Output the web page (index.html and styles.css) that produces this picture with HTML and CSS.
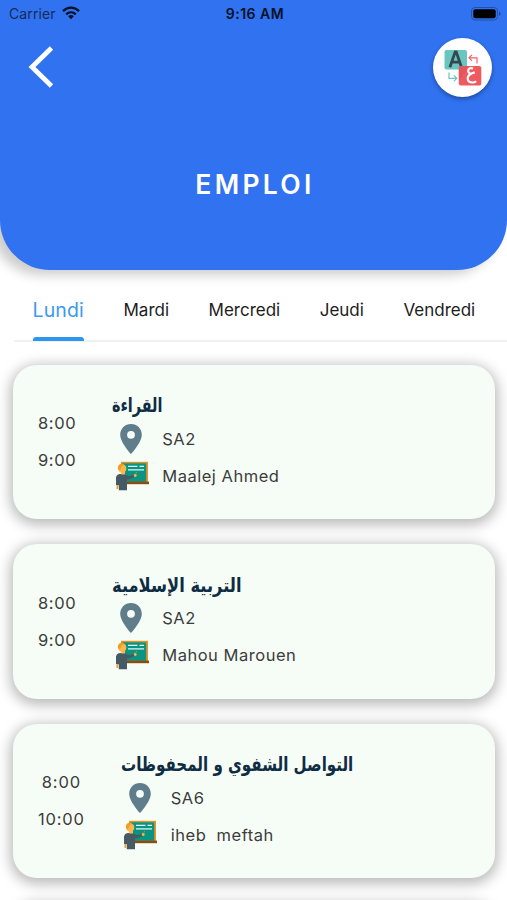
FILE: index.html
```html
<!DOCTYPE html>
<html lang="fr">
<head>
<meta charset="utf-8">
<title>Emploi</title>
<link rel="stylesheet" href="styles.css">
</head>
<body>
<svg class="defs" width="0" height="0" aria-hidden="true">
  <symbol id="pin" viewBox="0 0 22 30"><path fill="#607d8b" fill-rule="evenodd" d="M11 0C4.900 0 .2 4.700.2 10.700.2 18.500 11 30 11 30S21.800 18.500 21.800 10.700C21.800 4.700 17.100 0 11 0ZM11 6.900a3.900 3.900 0 1 1 0 7.800a3.900 3.900 0 0 1 0-7.800Z"/></symbol>
  <symbol id="teacher" viewBox="0 0 34 30">
    <path fill="#e69329" d="M6 .8h27v21H6z"/>
    <path fill="#0b9482" d="M7.500 2.300h23.700v18.500H7.500z"/>
    <path fill="#8a4b14" d="M10 20.600h24v2.600H10z"/>
    <path stroke="#dff5f0" stroke-width="1.400" d="M13 5.400h9.500M24.500 5.400h4.500M13 8.900h16"/>
    <path fill="#455a64" d="M1 17.500C1 14.200 3 13 6 13h3.500l4.500 2.200 5.500-1.600.8 2.200-6 2.400-2.300.2v10.900H3.800v-5L1 24Z"/>
    <circle cx="7.200" cy="7.600" r="4.100" fill="#ffb74d"/>
    <path fill="#f39c26" d="M3 8c-.7-4.800 3.500-6.500 6.500-4.200L6.500 5.500 5 9.500Z"/>
    <path fill="#ffb74d" d="M6 10h4v3.500H6z"/>
    <circle cx="20.200" cy="14.500" r="1.400" fill="#ffb74d"/>
    <path stroke="#c79a32" stroke-width=".7" d="m20 14 1.700-3"/>
    <path fill="#f39c26" d="M1.500 24h1.700v4H1.500z"/>
  </symbol>
</svg>
<header class="header">
  <div class="status">
    <div class="carrier"><span>Carrier</span>
      <svg width="18" height="14" viewBox="0 0 18 14" fill="none" stroke="#071126"><path stroke-width="2.300" d="M1 5.100C5.600.500 12.400.500 17 5.100M4.200 8.300C7 5.600 11 5.600 13.800 8.300"/><path fill="#071126" stroke="none" d="M6.200 10.200c1.700-1.500 3.900-1.500 5.600 0L9 13.200Z"/></svg>
    </div>
    <div class="clock">9:16 AM</div>
    <svg class="battery" width="30" height="14" viewBox="0 0 30 14"><rect x=".5" y=".5" width="26" height="12.500" rx="3.500" fill="none" stroke="#2350a5"/><rect x="2.300" y="2.300" width="22.400" height="9" rx="2" fill="#000"/><path fill="#1c4590" d="M28 4.700c2 .8 2 3.300 0 4.100Z"/></svg>
  </div>
  <div class="actions">
    <svg class="back" width="26" height="42" viewBox="0 0 26 42"><path d="M23.500 2 4 21l19.500 19" fill="none" stroke="#fff" stroke-width="4.800"/></svg>
    <div class="language">
      <svg width="38" height="38" viewBox="0 0 38 38">
        <rect x=".500" y="1" width="22.500" height="19.500" rx="2" fill="#68c5c0"/>
        <path d="m5.900 18.300 5.300-15.500h1l5.300 15.500M8 13.200h7.400" fill="none" stroke="#37474f" stroke-width="2.800"/>
        <rect x="14.800" y="17" width="22.500" height="19.500" rx="2" fill="#ef5a60"/>
        <path d="M14.800 19V32l8.200-11.500V17H16.800a2 2 0 0 0-2 2Z" fill="#cf5057" opacity=".4"/>
        <path d="M29 19.500c-5-2-6.500 4-2.500 5.200l4.300-1.300M28 24.500c-6 2-5.500 9 .5 9 1.800 0 2.800-.5 3.500-1.200" fill="none" stroke="#fff" stroke-width="2.200"/>
        <path d="M33 14.500V8.800h-8M28 5.800l-3 3 3 3" fill="none" stroke="#ef6268" stroke-width="1.200"/>
        <path d="M5 23.500v5.800h7.500M9.800 26.300l3 3-3 3" fill="none" stroke="#68c5c0" stroke-width="1.200"/>
      </svg>
    </div>
  </div>
  <h1 class="title">EMPLOI</h1>
</header>
<nav class="tabs">
  <a class="tab active">Lundi</a><a class="tab">Mardi</a><a class="tab">Mercredi</a><a class="tab">Jeudi</a><a class="tab">Vendredi</a>
</nav>
<main class="list">
  <article class="card">
    <div class="times"><span>8:00</span><span>9:00</span></div>
    <div class="details"><h2 class="subject s1" lang="ar" dir="rtl">القراءة</h2>
      <div class="row"><svg class="pin"><use href="#pin"/></svg><span>SA2</span></div>
      <div class="row"><svg class="teacher"><use href="#teacher"/></svg><span>Maalej Ahmed</span></div></div>
  </article>
  <article class="card">
    <div class="times"><span>8:00</span><span>9:00</span></div>
    <div class="details"><h2 class="subject s2" lang="ar" dir="rtl">التربية الإسلامية</h2>
      <div class="row"><svg class="pin"><use href="#pin"/></svg><span>SA2</span></div>
      <div class="row"><svg class="teacher"><use href="#teacher"/></svg><span>Mahou Marouen</span></div></div>
  </article>
  <article class="card">
    <div class="times wide"><span>8:00</span><span>10:00</span></div>
    <div class="details"><h2 class="subject s3" lang="ar" dir="rtl">التواصل الشفوي و المحفوظات</h2>
      <div class="row"><svg class="pin"><use href="#pin"/></svg><span>SA6</span></div>
      <div class="row"><svg class="teacher"><use href="#teacher"/></svg><span>iheb&nbsp; meftah</span></div></div>
  </article>
  <article class="card"></article>
</main>
</body>
</html>
```

FILE: styles.css
```css
* { box-sizing: border-box; }
html, body { height: 100%; }
body { margin: 0; background: #fff; overflow: hidden; font-family: Inter, "DejaVu Sans", sans-serif; display: flex; flex-direction: column; }
.defs { position: absolute; }
.header { flex: none; height: 269.500px; background: #3072f0; border-radius: 0 0 50px 50px; box-shadow: -9px 5px 12px rgba(0,0,0,.2); }
.status { height: 28px; display: grid; grid-template-columns: 1fr auto 1fr; align-items: center; padding: 0 6px 1px 9px; color: #071126; font-size: 14px; }
.carrier { display: flex; align-items: center; gap: 6px; color: #142b58; }
.carrier svg { margin-top: -1px; }
.carrier span { letter-spacing: .1px; }
.clock { font-weight: 600; font-size: 14px; letter-spacing: .5px; }
.battery { justify-self: end; }
.actions { display: flex; justify-content: space-between; padding: 10px 15px 0 28px; height: 70px; }
.back { margin-top: 8px; }
.language { width: 59px; height: 59px; border-radius: 50%; background: #fff; display: flex; align-items: center; justify-content: center; box-shadow: 0 2px 4px rgba(0,0,0,.35); }
.title { margin: 69.500px 0 0; text-align: center; color: #fff; font-size: 26.500px; line-height: 32px; font-weight: 600; letter-spacing: 3.300px; text-indent: 3px; }
.tabs { flex: none; height: 72px; margin-left: 14px; padding-left: 18.500px; border-bottom: 2px solid #f0f0f0; display: flex; gap: 39.500px; font-size: 17px; line-height: 80px; color: #1c1c1c; white-space: nowrap; }
.tab { height: 71px; }
.active { color: #3b9bed; font-size: 19.500px; letter-spacing: .15px; }
.active::after { content: ""; display: block; height: 4px; margin-top: -13px; background: #2d96ec; border-radius: 3px 3px 0 0; }
.list { flex: 1; min-height: 0; overflow: hidden; padding: 23.300px 12.500px 0 13px; display: flex; flex-direction: column; gap: 25px; }
.card { flex: none; height: 154.500px; border-radius: 24px; background: #f6fcf6; display: flex; gap: 36px; padding: 23.500px 25px; box-shadow: 0 3px 13px 3px rgba(0,0,0,.27); }
.times { display: flex; flex-direction: column; align-items: center; gap: 13px; padding-top: 23px; font-size: 16.500px; line-height: 24px; letter-spacing: .6px; color: #3b3d3b; }
.wide { letter-spacing: .8px; }
.details { display: flex; flex-direction: column; align-items: flex-start; color: #3b3d3b; }
.subject { margin: 0; height: 32px; line-height: 33px; font-family: "DejaVu Sans", sans-serif; font-size: 18px; font-weight: 700; color: #0e2c43; white-space: nowrap; transform-origin: left center; }
.s1 { transform: scale(.8, 1.08); }
.s2 { transform: scale(.905, 1.08); }
.s3 { transform: scale(.838, 1.08); }
.row { display: flex; align-items: center; height: 37px; gap: 13px; font-size: 16.500px; letter-spacing: .52px; }
.pin { width: 22px; height: 30px; margin: 0 7px 0 8px; }
.teacher { width: 34px; height: 30px; margin: 0 .5px 0 2.500px; }
```
